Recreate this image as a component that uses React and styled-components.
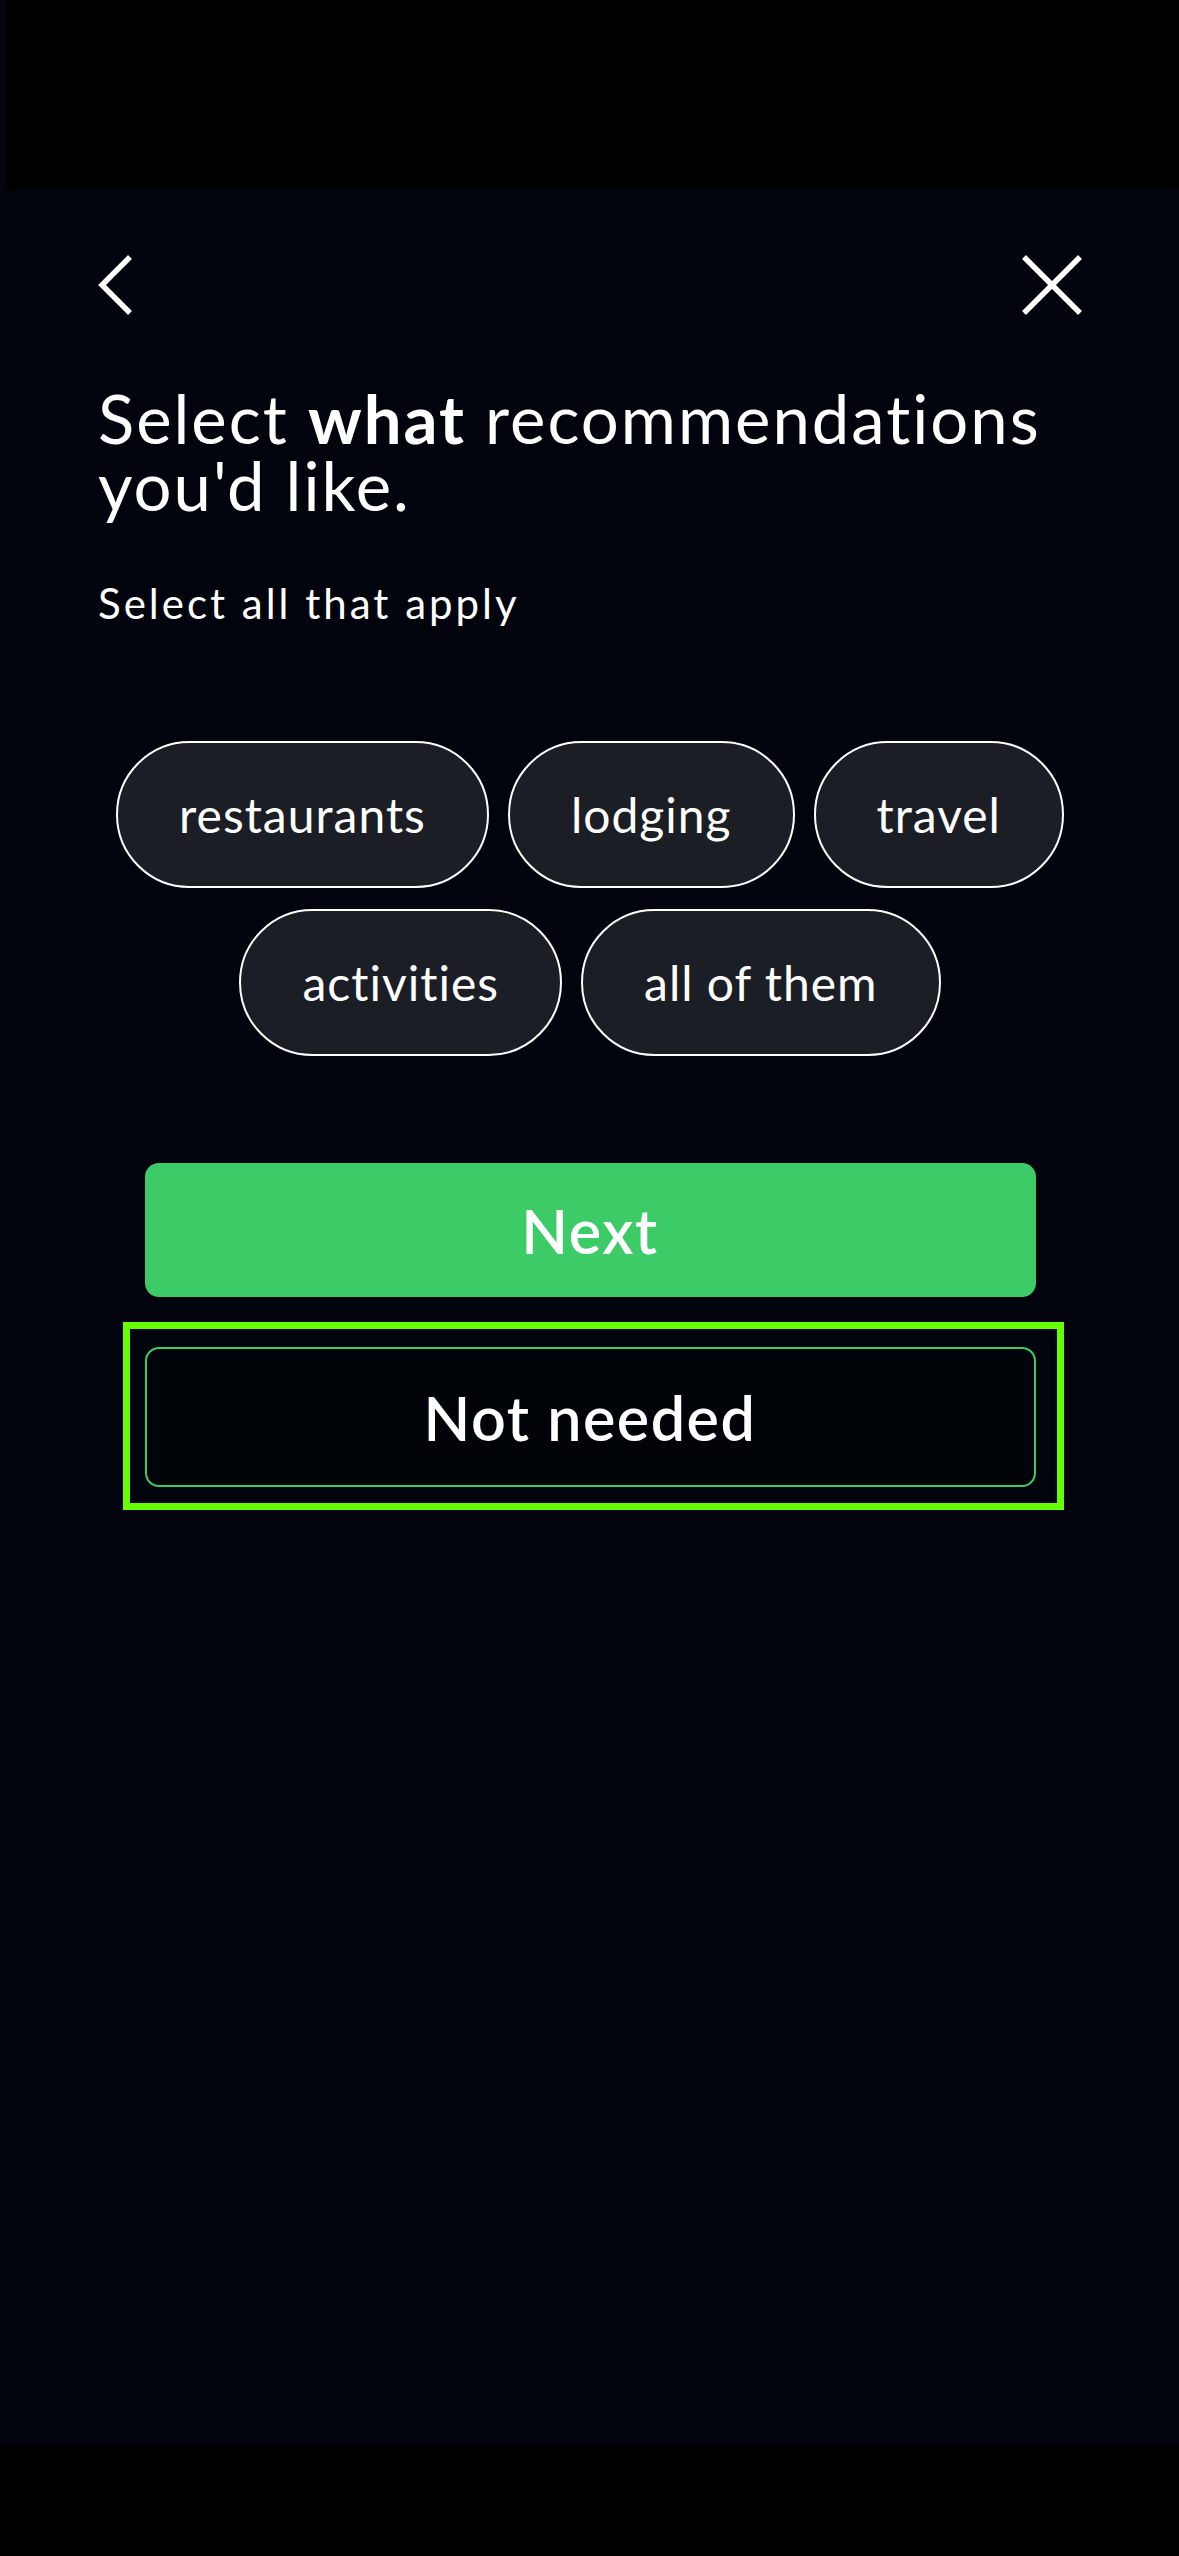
import React from 'react';
import styled, { createGlobalStyle } from 'styled-components';

const GlobalStyle = createGlobalStyle`
  html, body {
    margin: 0;
    padding: 0;
    background: #01040c;
  }
  * {
    box-sizing: border-box;
  }
`;

const Screen = styled.div`
  width: 1179px;
  min-height: 2556px;
  display: flex;
  flex-direction: column;
  background: #01040c;
  color: #ffffff;
  font-family: Lato, "Noto Sans", sans-serif;
`;

const StatusBar = styled.div`
  height: 190px;
  flex-shrink: 0;
  background: #000000;
  border-left: 6px solid #02050d;
`;

const BottomBar = styled.div`
  height: 111px;
  flex-shrink: 0;
  background: #000000;
`;

const Main = styled.main`
  flex: 1;
  display: flex;
  flex-direction: column;
  padding: 65px 96px 0 97px;
`;

const Header = styled.div`
  height: 60px;
  display: flex;
  align-items: center;
  justify-content: space-between;
`;

const IconButton = styled.button`
  padding: 0;
  border: none;
  background: none;
  display: flex;
  align-items: center;
  cursor: pointer;
`;

const Title = styled.h1`
  margin: 70px 0 0 1px;
  font-size: 67px;
  line-height: 67px;
  font-weight: 400;
  letter-spacing: 2px;

  b {
    font-weight: 700;
  }
`;

const Subtitle = styled.p`
  margin: 60px 0 0 1px;
  font-size: 42px;
  line-height: 48px;
  font-weight: 400;
  letter-spacing: 3px;
`;

const ChipList = styled.div`
  margin-top: 114px;
  display: flex;
  flex-wrap: wrap;
  justify-content: center;
  gap: 21px 19px;
  padding: 0 10px;
`;

const Chip = styled.button`
  height: 147px;
  padding: 0 61px;
  border: 2.5px solid #ffffff;
  border-radius: 999px;
  background: #1c1e25;
  color: #ffffff;
  font-family: Lato, "Noto Sans", sans-serif;
  font-size: 48px;
  font-weight: 400;
  letter-spacing: 1px;
  cursor: pointer;
`;

const Actions = styled.div`
  margin-top: 107px;
  display: flex;
  flex-direction: column;
  align-items: center;
  gap: 50px;
`;

const ActionButton = styled.button`
  width: 891px;
  height: ${p => (p.$outline ? '140px' : '134px')};
  border-radius: 14px;
  border: ${p => (p.$outline ? '2.5px solid #3dcb68' : 'none')};
  background: ${p => (p.$outline ? '#000308' : '#3dcb68')};
  color: #ffffff;
  font-family: Lato, "Noto Sans", sans-serif;
  font-size: 61px;
  font-weight: 600;
  letter-spacing: 1.5px;
  cursor: pointer;
`;

const Highlighted = styled.div`
  position: relative;
`;

// lime focus frame drawn over the "Not needed" button
const Frame = styled.div`
  position: absolute;
  top: -25px;
  left: -22px;
  right: -28px;
  bottom: -23px;
  border: 7px solid #66ff00;
  pointer-events: none;
`;

const chips = ['restaurants', 'lodging', 'travel', 'activities', 'all of them'];

const App = () => {
  return <>
    <GlobalStyle />
    <Screen>
      <StatusBar />
      <Main>
        <Header>
          <IconButton aria-label="Back">
            <svg width="36" height="60" viewBox="0 0 36 60">
              <polyline points="33,2 5,30 33,58" fill="none" stroke="#fff" strokeWidth="5.5" />
            </svg>
          </IconButton>
          <IconButton aria-label="Close">
            <svg width="62" height="60" viewBox="0 0 62 60">
              <line x1="3" y1="2" x2="59" y2="58" stroke="#fff" strokeWidth="5.5" />
              <line x1="59" y1="2" x2="3" y2="58" stroke="#fff" strokeWidth="5.5" />
            </svg>
          </IconButton>
        </Header>
        <Title>Select <b>what</b> recommendations you'd like.</Title>
        <Subtitle>Select all that apply</Subtitle>
        <ChipList>
          {chips.map(c => <Chip key={c}>{c}</Chip>)}
        </ChipList>
        <Actions>
          <ActionButton>Next</ActionButton>
          <Highlighted>
            <ActionButton $outline>Not needed</ActionButton>
            <Frame />
          </Highlighted>
        </Actions>
      </Main>
      <BottomBar />
    </Screen>
  </>
}

export default App;
